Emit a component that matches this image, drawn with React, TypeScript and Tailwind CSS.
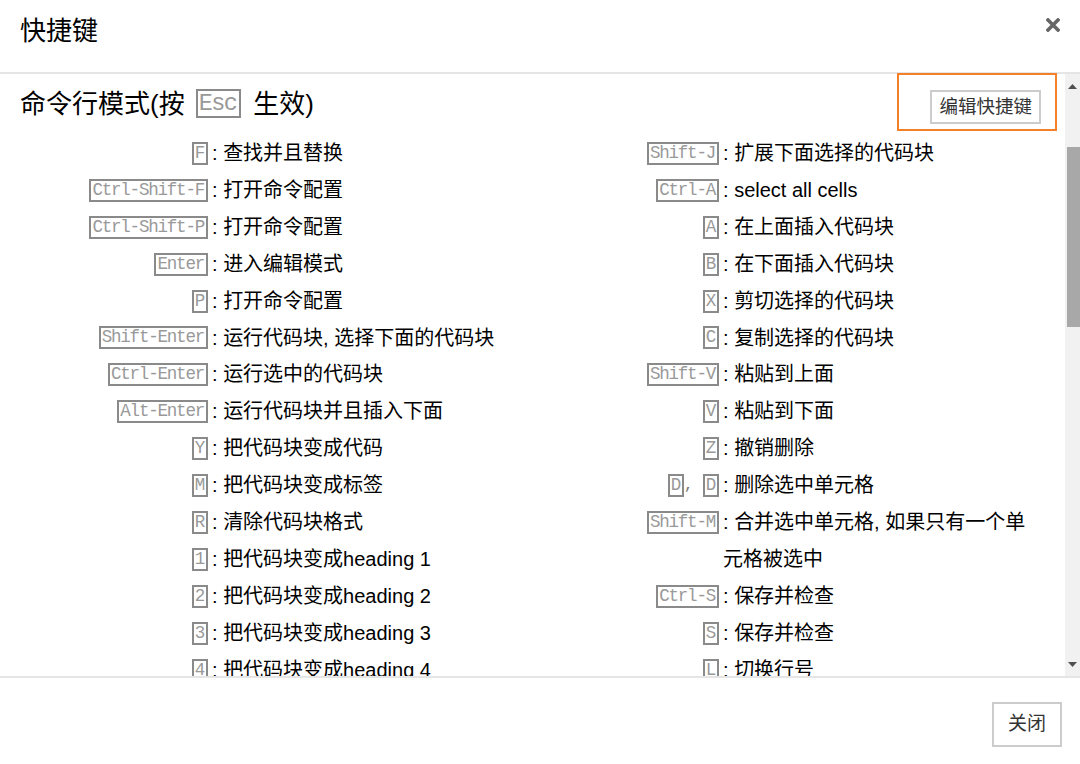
import React from 'react';

type Shortcut = { keys: string[]; desc: string };

const leftShortcuts: Shortcut[] = [
  { keys: ['F'], desc: '查找并且替换' },
  { keys: ['Ctrl-Shift-F'], desc: '打开命令配置' },
  { keys: ['Ctrl-Shift-P'], desc: '打开命令配置' },
  { keys: ['Enter'], desc: '进入编辑模式' },
  { keys: ['P'], desc: '打开命令配置' },
  { keys: ['Shift-Enter'], desc: '运行代码块, 选择下面的代码块' },
  { keys: ['Ctrl-Enter'], desc: '运行选中的代码块' },
  { keys: ['Alt-Enter'], desc: '运行代码块并且插入下面' },
  { keys: ['Y'], desc: '把代码块变成代码' },
  { keys: ['M'], desc: '把代码块变成标签' },
  { keys: ['R'], desc: '清除代码块格式' },
  { keys: ['1'], desc: '把代码块变成heading 1' },
  { keys: ['2'], desc: '把代码块变成heading 2' },
  { keys: ['3'], desc: '把代码块变成heading 3' },
  { keys: ['4'], desc: '把代码块变成heading 4' },
  { keys: ['5'], desc: '把代码块变成heading 5' },
  { keys: ['6'], desc: '把代码块变成heading 6' },
  { keys: ['K'], desc: '选择上面的代码块' },
];

const rightShortcuts: Shortcut[] = [
  { keys: ['Shift-J'], desc: '扩展下面选择的代码块' },
  { keys: ['Ctrl-A'], desc: 'select all cells' },
  { keys: ['A'], desc: '在上面插入代码块' },
  { keys: ['B'], desc: '在下面插入代码块' },
  { keys: ['X'], desc: '剪切选择的代码块' },
  { keys: ['C'], desc: '复制选择的代码块' },
  { keys: ['Shift-V'], desc: '粘贴到上面' },
  { keys: ['V'], desc: '粘贴到下面' },
  { keys: ['Z'], desc: '撤销删除' },
  { keys: ['D', 'D'], desc: '删除选中单元格' },
  { keys: ['Shift-M'], desc: '合并选中单元格, 如果只有一个单元格被选中' },
  { keys: ['Ctrl-S'], desc: '保存并检查' },
  { keys: ['S'], desc: '保存并检查' },
  { keys: ['L'], desc: '切换行号' },
  { keys: ['O'], desc: '选择单元格的输出' },
  { keys: ['Shift-O'], desc: '切换选定单元的输出滚动' },
];

const Kbd = ({ children }: { children: React.ReactNode }) => (
  <span className="inline-block border-2 border-[#8a8a8a] pl-px pr-[2px] font-['Liberation_Mono',monospace] text-[17.5px] leading-[19px] tracking-[-1.2px] text-[#999]">
    {children}
  </span>
);

function ShortcutColumn({ items, descWidth }: { items: Shortcut[]; descWidth: string }) {
  return (
    <div className="flex flex-col">
      {items.map((item, i) => (
        <div key={i} className="flex items-start">
          <div className="flex h-[36.9px] w-[208px] shrink-0 items-center justify-end">
            {item.keys.map((k, j) => (
              <React.Fragment key={j}>
                {j > 0 && (
                  <span className="whitespace-pre font-['Liberation_Mono',monospace] text-[15.5px] text-[#777]">, </span>
                )}
                <Kbd>{k}</Kbd>
              </React.Fragment>
            ))}
          </div>
          <div className={`${descWidth} pl-[4px] text-[20px] leading-[36.9px] text-black`}>: {item.desc}</div>
        </div>
      ))}
    </div>
  );
}

export default function App() {
  return (
    <div className="relative flex h-[764px] w-[1080px] flex-col overflow-hidden bg-white font-['Liberation_Sans','Noto_Sans_CJK_SC',sans-serif]">
      {/* Header */}
      <div className="flex h-[74px] shrink-0 items-start justify-between border-b-2 border-[#e5e5e5] px-5">
        <h1 className="pt-[14px] text-[26px] leading-[34px] text-black">快捷键</h1>
        <svg className="mt-[18px]" width="14" height="14" viewBox="0 0 14 14">
          <path d="M2 2 L12 12 M12 2 L2 12" stroke="#666" strokeWidth="3.6" strokeLinecap="square" />
        </svg>
      </div>

      {/* Body */}
      <div className="flex min-h-0 flex-1">
        <div className="min-w-0 flex-1 overflow-hidden">
          <div className="flex items-start justify-between">
            <h2 className="pl-5 pt-[13px] text-[26px] leading-[34px] text-black">
              命令行模式(按
              <span className="ml-[11px] mr-[12px] inline-block border-2 border-[#8a8a8a] pl-[1px] pr-[3px] align-[3px] font-['Liberation_Mono',monospace] text-[23.5px] leading-[25px] tracking-[-1.6px] text-[#999]">
                Esc
              </span>
              生效)
            </h2>
            <button className="mr-[24px] mt-[16px] border-2 border-[#ccc] bg-white px-[7px] text-[18.5px] leading-[30px] text-[#333]">
              编辑快捷键
            </button>
          </div>
          <div className="mt-[11px] flex">
            <div className="w-[511px] shrink-0">
              <ShortcutColumn items={leftShortcuts} descWidth="w-[303px]" />
            </div>
            <ShortcutColumn items={rightShortcuts} descWidth="w-[320px]" />
          </div>
        </div>

        {/* Scrollbar */}
        <div className="flex w-[15px] shrink-0 flex-col bg-[#f1f1f1]">
          <div className="flex h-[24px] items-center justify-center">
            <svg width="9" height="5" viewBox="0 0 9 5">
              <path d="M4.5 0 L9 5 L0 5 Z" fill="#505050" />
            </svg>
          </div>
          <div className="ml-[2px] mt-[49px] h-[180px] bg-[#a8a8a8]" />
          <div className="flex-1" />
          <div className="flex h-[24px] items-center justify-center">
            <svg width="9" height="5" viewBox="0 0 9 5">
              <path d="M0 0 L9 0 L4.5 5 Z" fill="#505050" />
            </svg>
          </div>
        </div>
      </div>

      {/* Footer */}
      <div className="flex h-[88px] shrink-0 items-start justify-end border-t-2 border-[#e5e5e5] pr-[18px] pt-[24px]">
        <button className="h-[45px] w-[70px] border-2 border-[#ccc] bg-white text-[19px] text-[#333]">关闭</button>
      </div>

      {/* Highlight around edit button */}
      <div className="pointer-events-none absolute left-[897px] top-[73px] h-[58px] w-[160px] border-2 border-[#f5802a]" />
    </div>
  );
}
